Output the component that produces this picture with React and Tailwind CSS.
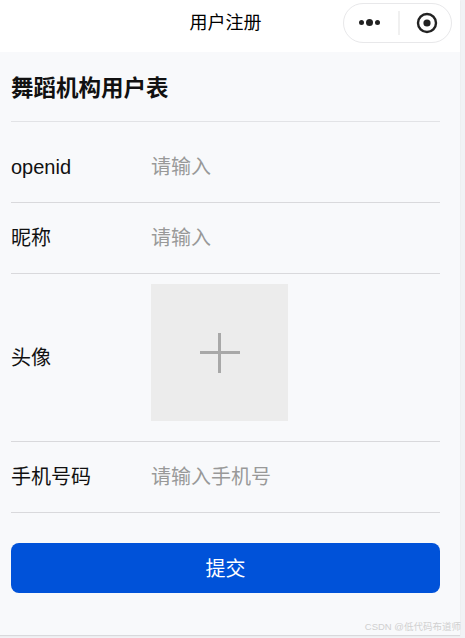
const CJK = "font-['Liberation_Sans','Noto_Sans_CJK_SC',sans-serif]";

function Row({ label, placeholder }) {
  return (
    <div className="flex h-[71px] items-center border-b border-[#d9d9dc]">
      <div className="w-[140px] text-[20px] text-[#111]">{label}</div>
      <div className="text-[20px] text-[#999]">{placeholder}</div>
    </div>
  );
}

export default function App() {
  return (
    <div className={`${CJK} h-[638px] w-[465px] overflow-hidden bg-[#f1f2f5]`}>
      <div className="relative h-[635px] w-[460px] bg-[#f8f9fb] shadow-[0_1px_1px_#d9d9dc]">
        <div className="relative flex h-[52px] items-center justify-center bg-white pb-[5px] pr-[9px]">
          <span className="text-[18px] text-black">用户注册</span>
          <div className="absolute left-[343px] top-[3px] flex h-[40px] w-[109px] items-center rounded-full border border-[#e8e8ea] bg-white">
            <div className="flex w-[54px] items-center justify-center gap-[2px] pb-[1px] pr-[3px]">
              <span className="h-[5px] w-[5px] rounded-full bg-[#222]"></span>
              <span className="h-[7px] w-[7px] rounded-full bg-[#222]"></span>
              <span className="h-[5px] w-[5px] rounded-full bg-[#222]"></span>
            </div>
            <div className="h-[24px] w-[2px] bg-[#f0f0f0]"></div>
            <div className="flex flex-1 items-center justify-center pl-[3px]">
              <svg width="22" height="22" viewBox="0 0 22 22">
                <circle cx="11" cy="11" r="9" fill="none" stroke="#222" strokeWidth="2.4" />
                <circle cx="11" cy="11" r="3.6" fill="#222" />
              </svg>
            </div>
          </div>
        </div>
        <div className="px-[11px] pr-[20px]">
          <div className="flex h-[70px] items-center border-b border-[#e2e3e6] pt-[4px]">
            <h1 className="text-[22.5px] font-bold text-[#111]">舞蹈机构用户表</h1>
          </div>
          <div className="flex h-[81px] items-center border-b border-[#d9d9dc] pt-[10px]">
            <div className="w-[140px] text-[20px] text-[#111]">openid</div>
            <div className="text-[20px] text-[#999]">请输入</div>
          </div>
          <Row label="昵称" placeholder="请输入" />
          <div className="flex h-[168px] items-center border-b border-[#d9d9dc]">
            <div className="w-[140px] text-[20px] text-[#111]">头像</div>
            <div className="mb-[10px] flex h-[137px] w-[137px] items-center justify-center bg-[#ececec]">
              <svg width="40" height="40" viewBox="0 0 40 40">
                <rect x="0" y="18" width="40" height="3" fill="#a8a8a8" />
                <rect x="18" y="0" width="3" height="40" fill="#a8a8a8" />
              </svg>
            </div>
          </div>
          <Row label="手机号码" placeholder="请输入手机号" />
          <button className="mt-[30px] flex h-[50px] w-full items-center justify-center rounded-[8px] bg-[#0052d9] pt-[1px] text-[20px] text-white">
            提交
          </button>
        </div>
        <div className="absolute bottom-[1px] right-[-1px] text-[9.5px] text-[#d0d0d0]">CSDN @低代码布道师</div>
      </div>
    </div>
  );
}
